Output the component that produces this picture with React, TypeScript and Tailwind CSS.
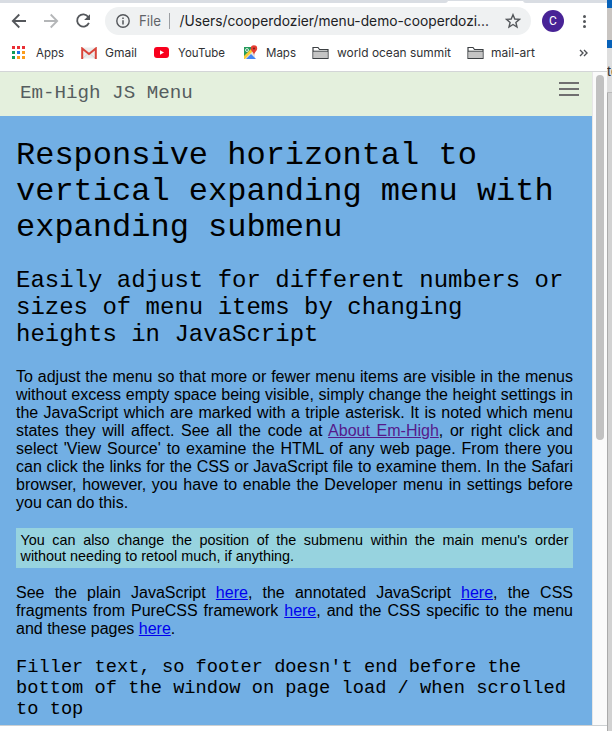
import type { ReactNode } from "react";

function Folder() {
  return (
    <svg width="17" height="14" viewBox="0 0 17 14" className="block">
      <path d="M1 12.5V1.5H6L7.5 3.5H16V12.5Z" fill="#fff" stroke="#3c4043" strokeWidth="1.2" />
      <path d="M1.5 5.5H15.5V12H1.5Z" fill="#c4c4c4" />
      <path d="M1 5.2H16" stroke="#3c4043" strokeWidth="1" />
    </svg>
  );
}

function Bookmark({ icon, label, gap, textWidth }: { icon: ReactNode; label: string; gap: string; textWidth: number }) {
  return (
    <div className={`flex items-center ${gap}`}>
      {icon}
      <svg width={textWidth} height="18" className="block overflow-visible">
        <text x="0" y="13" textLength={textWidth} lengthAdjust="spacingAndGlyphs" fill="#303134" className="font-['Inter',sans-serif] text-[12px]">{label}</text>
      </svg>
    </div>
  );
}

const dots = ["#ea2f35", "#ea2f35", "#ea2f35", "#0f9d58", "#1a73e8", "#fb9d1c", "#0f9d58", "#fb9d1c", "#fb9d1c"];

function Toolbar() {
  return (
    <div className="flex h-[35px] items-center pt-px">
      <svg width="105" height="34" viewBox="0 0 105 34" fill="none" strokeWidth="1.8" className="block shrink-0">
        <path d="M26 17H13M19.3 10.5L12.8 17L19.3 23.5" stroke="#54575b" />
        <path d="M44 17H57M50.7 10.5L57.2 17L50.7 23.5" stroke="#b4b6b8" />
        <path d="M88.3 13A6.1 6.1 0 1 0 88.9 18.8" stroke="#54575b" />
        <path d="M90 10.2V16.1H84.1Z" fill="#54575b" />
      </svg>
      <div className="flex h-7 w-[426px] shrink-0 items-center rounded-full bg-[#eff1f2] pl-[11px]">
        <svg width="14" height="14" viewBox="0 0 14 14" fill="none" stroke="#54575b" className="block shrink-0">
          <circle cx="7" cy="7" r="6.2" strokeWidth="1.4" />
          <path d="M7 6.2V10.5M7 3.5V5" strokeWidth="1.5" />
        </svg>
        <svg width="352" height="24" className="ml-[9px] block shrink-0 overflow-visible">
          <text x="0" y="17" textLength="22" lengthAdjust="spacingAndGlyphs" fill="#5f6368" className="font-['Inter',sans-serif] text-[14px]">File</text>
          <rect x="30" y="4" width="1" height="16" fill="#9c9fa3" />
          <text x="40.5" y="17" textLength="309.5" lengthAdjust="spacingAndGlyphs" fill="#202124" className="font-['Inter',sans-serif] text-[14px]">/Users/cooperdozier/menu-demo-cooperdozi...</text>
        </svg>
        <svg width="16" height="16" viewBox="0 0 16 16" fill="none" stroke="#54575b" strokeWidth="1.4" className="ml-[14px] block shrink-0">
          <path d="M8 1.7L9.8 6L14.4 6.4L10.9 9.4L12 14L8 11.5L4 14L5.1 9.4L1.6 6.4L6.2 6Z" />
        </svg>
      </div>
      <div className="ml-[11px] flex size-[22px] items-center justify-center rounded-full bg-[#482396] font-['Roboto',sans-serif] text-[12px] text-white">C</div>
      <div className="ml-[19px] flex flex-col gap-[2px]">
        <i className="size-[3px] rounded-full bg-[#54575b]" />
        <i className="size-[3px] rounded-full bg-[#54575b]" />
        <i className="size-[3px] rounded-full bg-[#54575b]" />
      </div>
    </div>
  );
}

function Bookmarks() {
  return (
    <div className="flex h-[33px] items-center pb-[4px] pl-3">
      <Bookmark gap="gap-[11px]" textWidth={28} label="Apps" icon={
        <div className="grid grid-cols-3 gap-[2px]">
          {dots.map((c, i) => <i key={i} className="size-[3px]" style={{ background: c }} />)}
        </div>
      } />
      <div className="w-[17px]" />
      <Bookmark gap="gap-2" textWidth={32} label="Gmail" icon={
        <svg width="16" height="12" viewBox="0 0 16 12" className="block">
          <path d="M1 .5H15V11.5H1Z" fill="#ececec" />
          <path d="M2 11L8 6L14 11" fill="none" stroke="#d5d5d5" />
          <path d="M1.2 12V1.5L8 7L14.8 1.5V12" fill="none" stroke="#d9453a" strokeWidth="2" />
        </svg>
      } />
      <div className="w-[17px]" />
      <Bookmark gap="gap-[9px]" textWidth={47} label="YouTube" icon={
        <svg width="15" height="11" viewBox="0 0 15 11" className="block">
          <rect width="15" height="11" rx="3" fill="#f8001d" />
          <path d="M6 3.2L10 5.5L6 7.8Z" fill="#fff" />
        </svg>
      } />
      <div className="w-[18px]" />
      <Bookmark gap="gap-2" textWidth={30} label="Maps" icon={
        <svg width="15" height="15" viewBox="0 0 15 15" className="block">
          <path d="M1 2H12V14H1Z" fill="#259b5b" />
          <path d="M1 13L9 5L12 8V14H1Z" fill="#e9e6dc" />
          <path d="M1 11L9 3L11 5L2 14H1Z" fill="#fbcb35" />
          <path d="M3 14L8 9L13 14Z" fill="#4285f4" />
          <circle cx="4" cy="5" r="1.5" fill="none" stroke="#fff" strokeWidth=".8" />
          <path d="M11 10C10.5 7 7.8 6 7.8 3.5A3.2 3.2 0 0 1 14.2 3.5C14.2 6 11.5 7 11 10Z" fill="#e63e32" />
          <circle cx="11" cy="3.5" r="1.1" fill="#85211d" />
        </svg>
      } />
      <div className="w-4" />
      <Bookmark gap="gap-2" textWidth={114} label="world ocean summit" icon={<Folder />} />
      <div className="w-4" />
      <Bookmark gap="gap-[7px]" textWidth={44} label="mail-art" icon={<Folder />} />
      <svg width="10" height="8" viewBox="0 0 10 8" fill="none" stroke="#4f5256" strokeWidth="1.4" className="ml-[44px] block">
        <path d="M1 1L4 4L1 7M5 1L8 4L5 7" />
      </svg>
    </div>
  );
}

function Line({ width, children }: { width?: string; children: ReactNode }) {
  return <span className={`block whitespace-nowrap [text-align-last:justify] ${width ?? "w-full"}`}>{children}</span>;
}

function Link({ children, visited }: { children: ReactNode; visited?: boolean }) {
  return <a href="#" className={`underline ${visited ? "text-[#551a8b]" : "text-[#0000ee]"}`}>{children}</a>;
}

function Page() {
  return (
    <main className="h-[609px] w-[592px] overflow-hidden bg-[#72afe4] pt-[22px] pr-[19px] pl-4 text-black">
      <h1 className="font-['Liberation_Mono',monospace] text-[32px] leading-9">
        Responsive horizontal to<br />vertical expanding menu with<br />expanding submenu
      </h1>
      <h2 className="mt-[21px] font-['Liberation_Mono',monospace] text-[24px] leading-[27px]">
        Easily adjust for different numbers or<br />sizes of menu items by changing<br />heights in JavaScript
      </h2>
      <div className="mt-5 font-['Liberation_Sans',sans-serif] text-[16px] leading-[18px]">
        <Line>To adjust the menu so that more or fewer menu items are visible in the menus</Line>
        <Line>without excess empty space being visible, simply change the height settings in</Line>
        <Line>the JavaScript which are marked with a triple asterisk. It is noted which menu</Line>
        <Line>states they will affect. See all the code at <Link visited>About Em-High</Link>, or right click and</Line>
        <Line>select 'View Source' to examine the HTML of any web page. From there you</Line>
        <Line>can click the links for the CSS or JavaScript file to examine them. In the Safari</Line>
        <Line>browser, however, you have to enable the Developer menu in settings before</Line>
        <Line width="w-[112px]">you can do this.</Line>
      </div>
      <div className="mt-4 h-10 bg-[#97d3df] px-[4.5px] py-1 font-['Liberation_Sans',sans-serif] text-[14.4px] leading-4">
        <Line>You can also change the position of the submenu within the main menu's order</Line>
        <Line width="w-[273px]">without needing to retool much, if anything.</Line>
      </div>
      <div className="mt-4 font-['Liberation_Sans',sans-serif] text-[16px] leading-[18px]">
        <Line>See the plain JavaScript <Link>here</Link>, the annotated JavaScript <Link>here</Link>, the CSS</Line>
        <Line>fragments from PureCSS framework <Link>here</Link>, and the CSS specific to the menu</Line>
        <Line width="w-[159px]">and these pages <Link>here</Link>.</Line>
      </div>
      <h3 className="mt-[19px] font-['Liberation_Mono',monospace] text-[18.72px] leading-[21px] whitespace-nowrap">
        Filler text, so footer doesn't end before the<br />bottom of the window on page load / when scrolled<br />to top
      </h3>
    </main>
  );
}

export default function App() {
  return (
    <div className="flex h-[731px] w-[612px] overflow-hidden bg-white">
      <div className="flex w-[607px] shrink-0 flex-col">
        <div className="flex h-[3px] bg-white">
          <div className="w-[448px] rounded-br bg-[#d9dde3]" />
          <div className="h-px w-[75px] bg-[#d9dde3]" />
          <div className="grow rounded-bl bg-[#d9dde3]" />
        </div>
        <Toolbar />
        <Bookmarks />
        <div className="h-px bg-[#d3d5d7]" />
        <div className="flex h-[653px]">
          <div className="w-[592px]">
            <header className="flex h-11 items-center justify-between bg-[#e4f0dd] pr-[13px] pl-5">
              <span className="pb-[2px] font-['Liberation_Mono',monospace] text-[19.2px] leading-6 text-[#555d5f]">Em-High JS Menu</span>
              <div className="mb-[10px] flex w-5 flex-col gap-1">
                <i className="h-[2px] bg-[#706f70]" />
                <i className="h-[2px] bg-[#706f70]" />
                <i className="h-[2px] bg-[#706f70]" />
              </div>
            </header>
            <Page />
          </div>
          <div className="w-[15px] border-l border-[#e6e6e6] bg-[#fafafa] pt-[3px] pl-[3px]">
            <div className="h-[365px] w-2 rounded-full bg-[#c1c1c1]" />
          </div>
        </div>
        <div className="h-px bg-[#ccd0d2]" />
      </div>
      <div className="flex grow flex-col overflow-hidden bg-[#d2d2d2]">
        <div className="h-2 bg-[#0761b8]" />
        <div className="h-8 bg-[#c9c5c2]" />
        <div className="h-2 bg-[#0761b8]" />
        <div className="h-[45px] shrink-0 border-b border-[#bbb] bg-[#dedede] pt-[14px] font-['Liberation_Sans',sans-serif] text-[14px] leading-[18px] whitespace-nowrap text-[#333]">te</div>
        <div className="grow border-l border-[#aaa]" />
      </div>
    </div>
  );
}
